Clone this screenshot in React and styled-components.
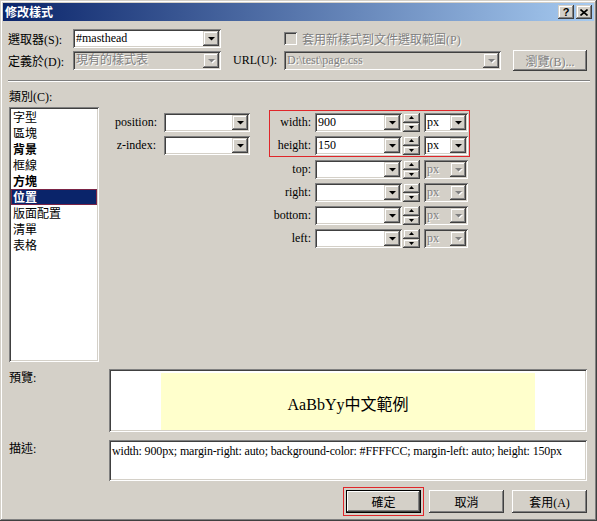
import React from 'react'
import styled, { createGlobalStyle, css } from 'styled-components'

const GlobalStyle = createGlobalStyle`
  html, body {
    margin: 0;
    padding: 0;
    background: #d4d0c8;
  }
  body {
    font-family: "Liberation Serif", "Noto Sans CJK TC", serif;
    font-size: 12px;
    color: #000;
  }
`

const sunken = css`
  box-shadow: inset 1px 1px #808080, inset -1px -1px #ffffff,
    inset 2px 2px #404040, inset -2px -2px #d4d0c8;
`

const raised = css`
  box-shadow: inset -1px -1px #404040, inset 1px 1px #ffffff,
    inset -2px -2px #808080, inset 2px 2px #d4d0c8;
`

const smallRaised = css`
  box-shadow: inset -1px -1px #404040, inset 1px 1px #d4d0c8,
    inset -2px -2px #808080, inset 2px 2px #ffffff;
`

const disabledText = css`
  color: #808080;
  text-shadow: 1px 1px #ffffff;
`

const Window = styled.div`
  width: 597px;
  height: 521px;
  box-sizing: border-box;
  padding: 3px;
  display: flex;
  flex-direction: column;
  background: #d4d0c8;
  box-shadow: inset -1px -1px #404040, inset 1px 1px #d4d0c8,
    inset -2px -2px #808080, inset 2px 2px #ffffff;
`

const TitleBar = styled.div`
  height: 18px;
  flex: none;
  display: flex;
  align-items: center;
  padding: 0 2px 0 2px;
  background: linear-gradient(to right, #0a246a, #a6caf0);
  color: #fff;
  font-family: "Noto Sans CJK TC", sans-serif;
  font-weight: bold;
  font-size: 12px;
`

const TitleText = styled.span`
  flex: 1;
  line-height: 18px;
`

const TitleButton = styled.span`
  width: 16px;
  height: 14px;
  margin-left: ${p => p.$gap || 0}px;
  box-sizing: border-box;
  display: flex;
  align-items: center;
  justify-content: center;
  background: #d4d0c8;
  color: #000;
  font-family: "Liberation Sans", sans-serif;
  font-size: 11px;
  font-weight: bold;
  ${smallRaised};
`

const Body = styled.div`
  flex: 1;
  display: flex;
  flex-direction: column;
  padding: 8px 7px 0 6px;
`

const Row = styled.div`
  display: flex;
  align-items: center;
  height: ${p => p.$h || 19}px;
  margin-top: ${p => p.$mt || 0}px;
`

const FieldLabel = styled.span`
  flex: none;
  width: ${p => p.$w}px;
  margin-left: ${p => p.$ml || 0}px;
  white-space: nowrap;
  text-align: ${p => (p.$right ? 'right' : 'left')};
`

const ComboBox = styled.div`
  flex: none;
  width: ${p => p.$w}px;
  height: 19px;
  margin-left: ${p => p.$ml || 0}px;
  box-sizing: border-box;
  padding: 2px;
  display: flex;
  align-items: center;
  background: ${p => (p.$disabled ? '#d4d0c8' : '#ffffff')};
  ${sunken};
`

const ComboText = styled.span`
  flex: 1;
  padding-left: 1px;
  line-height: 15px;
  white-space: nowrap;
  overflow: hidden;
  ${p => p.$disabled && disabledText};
`

const DropButton = styled.span`
  flex: none;
  width: 16px;
  height: 15px;
  box-sizing: border-box;
  display: flex;
  align-items: center;
  justify-content: center;
  background: #d4d0c8;
  ${smallRaised};
`

const Spinner = styled.div`
  flex: none;
  width: 17px;
  height: 19px;
  margin-left: 1px;
  display: flex;
  flex-direction: column;
`

const SpinButton = styled.span`
  flex: 1;
  display: flex;
  align-items: center;
  justify-content: center;
  background: #d4d0c8;
  ${smallRaised};
`

const CheckBox = styled.span`
  flex: none;
  width: 13px;
  height: 13px;
  margin-left: ${p => p.$ml || 0}px;
  margin-right: 5px;
  background: #d4d0c8;
  box-shadow: inset 1px 1px #808080, inset -1px -1px #ffffff,
    inset 2px 2px #404040, inset -2px -2px #d4d0c8;
`

const MutedText = styled.span`
  white-space: nowrap;
  ${disabledText};
`

const PushButton = styled.button`
  flex: none;
  width: ${p => p.$w || 75}px;
  height: ${p => p.$h || 23}px;
  margin-left: ${p => p.$ml || 0}px;
  padding: 0;
  border: none;
  background: #d4d0c8;
  font-family: "Liberation Serif", "Noto Sans CJK TC", serif;
  font-size: 12px;
  color: #000;
  ${raised};
  ${p => p.$disabled && disabledText};
  ${p =>
    p.$default &&
    css`
      box-shadow: inset 0 0 0 1px #000000, inset -2px -2px #404040,
        inset 2px 2px #ffffff, inset -3px -3px #808080;
      outline: 1px solid #e0262a;
      outline-offset: 2px;
    `};
`

const Separator = styled.div`
  height: 0;
  border-top: 1px solid #808080;
  border-bottom: 1px solid #ffffff;
  margin: 9px -3px 0 -1px;
`

const Section = styled.div`
  display: flex;
  margin-top: ${p => p.$mt || 0}px;
  height: ${p => p.$h}px;
`

const CategoryColumn = styled.div`
  flex: none;
  width: 90px;
  margin-right: 10px;
  display: flex;
  flex-direction: column;
`

const SectionLabel = styled.div`
  flex: none;
  width: ${p => p.$w || 100}px;
  line-height: 14px;
  margin-top: ${p => p.$mt || 0}px;
  white-space: nowrap;
`

const ListBox = styled.div`
  margin-top: 3px;
  height: 255px;
  box-sizing: border-box;
  padding: 2px;
  background: #fff;
  font-family: "Noto Sans CJK TC", sans-serif;
  ${sunken};
`

const ListItem = styled.div`
  height: 16px;
  line-height: 16px;
  padding-left: 2px;
  box-sizing: border-box;
  font-weight: ${p => (p.$bold ? 'bold' : 'normal')};
  ${p =>
    p.$selected &&
    css`
      background: #0a246a;
      color: #fff;
      font-weight: bold;
      border: 1px solid #7a2446;
      padding-left: 1px;
      line-height: 14px;
    `};
`

const FormArea = styled.div`
  flex: 1;
  display: flex;
  align-items: flex-start;
  padding: 20px 0 0 6px;
`

const FieldGroup = styled.div`
  display: flex;
  flex-direction: column;
  gap: 4px;
  padding-top: ${p => p.$pt || 0}px;
  margin-left: ${p => p.$ml || 0}px;
`

const FieldBox = styled.div`
  display: flex;
  flex-direction: column;
  gap: 4px;
  padding: ${p => (p.$highlight ? '2px 1px 1px 0' : '0 1px 0 0')};
  border: 1px solid ${p => (p.$highlight ? '#e0262a' : 'transparent')};
  border-top-width: ${p => (p.$highlight ? 1 : 0)}px;
  border-bottom-width: ${p => (p.$highlight ? 1 : 0)}px;
  margin-top: ${p => p.$mt || 0}px;
`

const PreviewBox = styled.div`
  flex: 1;
  box-sizing: border-box;
  padding: 4px 2px 2px;
  background: #fff;
  display: flex;
  ${sunken};
`

const PreviewSample = styled.div`
  width: 374px;
  margin: 0 auto;
  background: #ffffcc;
  display: flex;
  align-items: center;
  justify-content: center;
  font-size: 16px;
  padding-top: 2px;
`

const DescBox = styled.div`
  flex: 1;
  box-sizing: border-box;
  padding: 4px 3px;
  background: #fff;
  line-height: 14px;
  white-space: nowrap;
  letter-spacing: -0.15px;
  ${sunken};
`

const ButtonRow = styled.div`
  display: flex;
  justify-content: flex-end;
  gap: 8px;
  margin-top: 9px;
`

const DownArrow = ({ muted }) => (
  <svg width="7" height="4" viewBox="0 0 7 4" style={{ display: 'block', overflow: 'visible' }}>
    {muted && <polygon points="1,1 8,1 4.5,4.5" fill="#fff" />}
    <polygon points="0,0 7,0 3.5,3.5" fill={muted ? '#808080' : '#000'} />
  </svg>
)

const TinyArrow = ({ up }) => (
  <svg width="5" height="3" viewBox="0 0 5 3" style={{ display: 'block' }}>
    <polygon points={up ? '2.5,0 5,3 0,3' : '0,0 5,0 2.5,3'} fill="#000" />
  </svg>
)

const Combo = ({ w, ml, value, disabled, mutedArrow }) => (
  <ComboBox $w={w} $ml={ml} $disabled={disabled}>
    <ComboText $disabled={disabled}>{value}</ComboText>
    <DropButton>
      <DownArrow muted={disabled || mutedArrow} />
    </DropButton>
  </ComboBox>
)

const SizeField = ({ label, value, enabledUnit }) => (
  <Row>
    <FieldLabel $w={41} $right>
      {label}
    </FieldLabel>
    <Combo w={87} ml={4} value={value} />
    <Spinner>
      <SpinButton>
        <TinyArrow up />
      </SpinButton>
      <SpinButton>
        <TinyArrow />
      </SpinButton>
    </Spinner>
    <Combo w={44} ml={4} value="px" disabled={!enabledUnit} />
  </Row>
)

const categories = [
  { name: '字型' },
  { name: '區塊' },
  { name: '背景', bold: true },
  { name: '框線' },
  { name: '方塊', bold: true },
  { name: '位置', selected: true },
  { name: '版面配置' },
  { name: '清單' },
  { name: '表格' },
]

export default function App() {
  return (
    <>
      <GlobalStyle />
      <Window>
        <TitleBar>
          <TitleText>修改樣式</TitleText>
          <TitleButton>?</TitleButton>
          <TitleButton $gap={2}>
            <svg width="8" height="7" viewBox="0 0 8 7">
              <path d="M0.5 0.5 L7.5 6.5 M7.5 0.5 L0.5 6.5" stroke="#000" strokeWidth="1.6" />
            </svg>
          </TitleButton>
        </TitleBar>

        <Body>
          <Row>
            <FieldLabel $w={64} $ml={-1}>
              選取器(S):
            </FieldLabel>
            <Combo w={148} ml={1} value="#masthead" />
            <CheckBox $ml={63} />
            <MutedText>套用新樣式到文件選取範圍(P)</MutedText>
          </Row>
          <Row $h={21} $mt={2}>
            <FieldLabel $w={64} $ml={-1}>
              定義於(D):
            </FieldLabel>
            <Combo w={148} ml={1} value="現有的樣式表" disabled />
            <FieldLabel $w={51} $ml={12}>
              URL(U):
            </FieldLabel>
            <Combo w={217} value="D:\test\page.css" disabled />
            <PushButton $w={74} $h={21} $ml={12} $disabled>
              瀏覽(B)...
            </PushButton>
          </Row>
          <Separator />

          <Section $mt={8} $h={272}>
            <CategoryColumn>
              <SectionLabel>類別(C):</SectionLabel>
              <ListBox>
                {categories.map(c => (
                  <ListItem key={c.name} $bold={c.bold} $selected={c.selected}>
                    {c.name}
                  </ListItem>
                ))}
              </ListBox>
            </CategoryColumn>
            <FormArea>
              <FieldGroup $pt={3}>
                <Row>
                  <FieldLabel $w={41} $right>
                    position:
                  </FieldLabel>
                  <Combo w={86} ml={8} value="" />
                </Row>
                <Row>
                  <FieldLabel $w={41} $right>
                    z-index:
                  </FieldLabel>
                  <Combo w={86} ml={8} value="" />
                </Row>
              </FieldGroup>
              <FieldGroup $ml={19}>
                <FieldBox $highlight>
                  <SizeField label="width:" value="900" enabledUnit />
                  <SizeField label="height:" value="150" enabledUnit />
                </FieldBox>
                <FieldBox $mt={-1}>
                  <SizeField label="top:" value="" />
                  <SizeField label="right:" value="" />
                  <SizeField label="bottom:" value="" />
                  <SizeField label="left:" value="" />
                </FieldBox>
              </FieldGroup>
            </FormArea>
          </Section>

          <Section $mt={7} $h={63}>
            <SectionLabel $mt={2}>預覽:</SectionLabel>
            <PreviewBox>
              <PreviewSample>AaBbYy中文範例</PreviewSample>
            </PreviewBox>
          </Section>

          <Section $mt={8} $h={41}>
            <SectionLabel $mt={2}>描述:</SectionLabel>
            <DescBox>
              width: 900px; margin-right: auto; background-color: #FFFFCC; margin-left: auto; height: 150px
            </DescBox>
          </Section>

          <ButtonRow>
            <PushButton $default>確定</PushButton>
            <PushButton>取消</PushButton>
            <PushButton>套用(A)</PushButton>
          </ButtonRow>
        </Body>
      </Window>
    </>
  )
}
